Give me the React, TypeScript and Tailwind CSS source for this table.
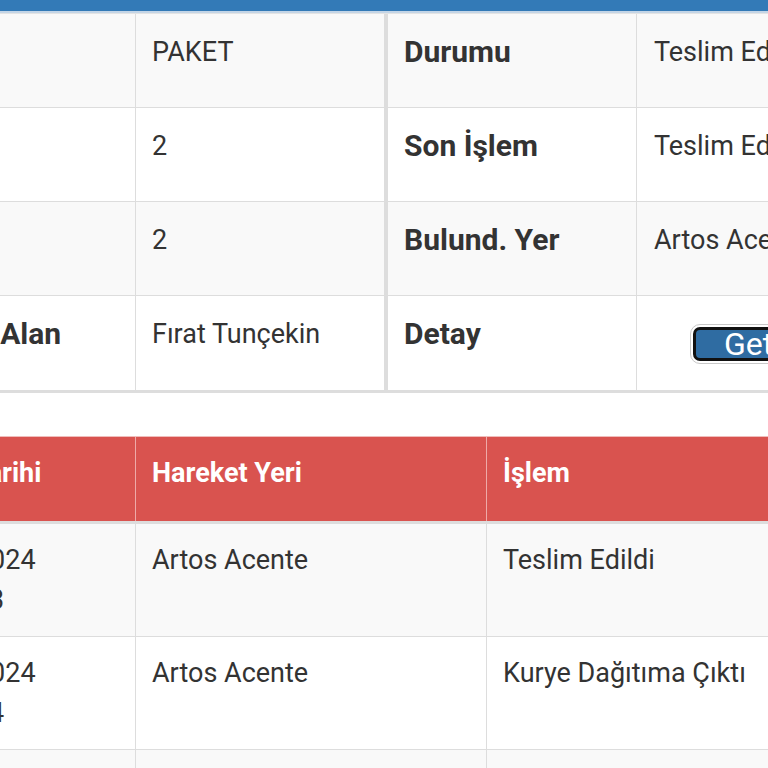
import React from 'react';

const infoRows = [
  { l1: 'Tipi', v1: 'PAKET', l2: 'Durumu', v2: 'Teslim Edildi' },
  { l1: 'Adet', v1: '2', l2: 'Son İşlem', v2: 'Teslim Edildi' },
  { l1: 'Desi', v1: '2', l2: 'Bulund. Yer', v2: 'Artos Acente' },
  { l1: 'Teslim Alan', v1: 'Fırat Tunçekin', l2: 'Detay', v2: null },
];

const moves = [
  { date: '12.03.2024', time: '16:43:23', place: 'Artos Acente', op: 'Teslim Edildi' },
  { date: '12.03.2024', time: '09:12:14', place: 'Artos Acente', op: 'Kurye Dağıtıma Çıktı' },
  { date: '11.03.2024', time: '22:05:41', place: 'İstanbul Transfer', op: 'Transfer Merkezinde' },
];

const cell = 'px-[16px] pt-[16px] text-[27px] leading-[40px] whitespace-nowrap overflow-hidden';
const infoCell = 'px-[16px] pt-[18px] leading-[40px] whitespace-nowrap overflow-hidden';

export default function App() {
  return (
    <div
      className="w-[768px] h-[768px] overflow-hidden bg-white text-[#333]"
      style={{ fontFamily: 'Roboto, "Noto Sans", sans-serif' }}
    >
      <div className="h-[11px] bg-[#337ab7]" />
      <div className="h-[2px] bg-[#c4d5e6]" />
      <div className="h-[1px] bg-[#e4e4e4]" />

      {/* package info */}
      <div className="ml-[-114px] w-[1100px] border-b-[3px] border-[#ddd]">
        {infoRows.map((r, i) => (
          <div
            key={i}
            className={`flex h-[94px] ${i < 3 ? 'border-b border-[#ddd]' : ''} ${i % 2 === 0 ? 'bg-[#f9f9f9]' : 'bg-white'}`}
          >
            <div className={`${infoCell} w-[250px] border-r border-[#ddd] text-[30px] font-bold`}>{r.l1}</div>
            <div className={`${infoCell} w-[248px] text-[27px]`}>{r.v1}</div>
            <div className="w-[4px] bg-[#ddd]" />
            <div className={`${infoCell} w-[249px] border-r border-[#ddd] text-[30px] font-bold`}>{r.l2}</div>
            {r.v2 ? (
              <div className={`${infoCell} w-[300px] pl-[17px] text-[27px]`}>{r.v2}</div>
            ) : (
              <div className="w-[300px] pt-[28px] pl-[53px]">
                <div className="inline-flex rounded-[10px] border border-[#c8c8c8] bg-white p-[2px]">
                  <button className="h-[34px] rounded-[7px] border-[3px] border-[#111] bg-[#2f6ca2] px-[28px] text-[32px] leading-[28px] text-white">
                    Getir
                  </button>
                </div>
              </div>
            )}
          </div>
        ))}
      </div>

      {/* movements */}
      <div className="mt-[43px] ml-[-116px] w-[1100px]">
        <div className="flex h-[88px] border-t border-[#f0bdbb] border-b-[3px] border-b-[#ddd] bg-[#d9534f] text-white font-bold">
          <div className={`${cell} w-[252px] border-r border-[#eeaaa8]`}>İşlem Tarihi</div>
          <div className={`${cell} w-[351px] border-r border-[#eeaaa8]`}>Hareket Yeri</div>
          <div className={`${cell} w-[400px]`}>İşlem</div>
        </div>
        {moves.map((m, i) => (
          <div
            key={i}
            className={`flex h-[113px] border-b border-[#ddd] ${i % 2 === 0 ? 'bg-[#f9f9f9]' : 'bg-white'}`}
          >
            <div className={`${cell} w-[252px] border-r border-[#ddd]`}>
              <div>{m.date}</div>
              <div>{m.time}</div>
            </div>
            <div className={`${cell} w-[351px] border-r border-[#ddd]`}>{m.place}</div>
            <div className={`${cell} w-[400px]`}>{m.op}</div>
          </div>
        ))}
      </div>
    </div>
  );
}
